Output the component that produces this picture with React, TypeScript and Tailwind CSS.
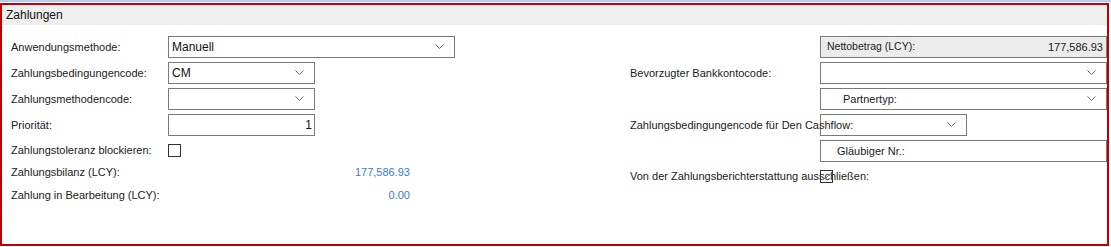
import React from 'react';

const font = { fontFamily: '"Liberation Sans", Arial, sans-serif' };

// small "v" chevron used by the dropdowns
const Chevron = () => (
  <svg width="9" height="6" viewBox="0 0 9 6" className="shrink-0">
    <polyline points="0.5,0.5 4.5,4.5 8.5,0.5" fill="none" stroke="#6b6b6b" strokeWidth="1" />
  </svg>
);

const Box = ({
  width,
  children,
  className = '',
}: {
  width: string;
  children?: React.ReactNode;
  className?: string;
}) => (
  <div className={`h-[22px] ${width} border border-[#7a7a7a] flex items-center ${className}`}>{children}</div>
);

const Dropdown = ({ width, value, indent = 'pl-[3px]' }: { width: string; value?: string; indent?: string }) => (
  <Box width={width} className={`${indent} pr-[10px] justify-between`}>
    <span className="text-[12px] text-[#111]">{value}</span>
    <Chevron />
  </Box>
);

const Label = ({ children, width }: { children: React.ReactNode; width: string }) => (
  <div className={`${width} shrink-0 whitespace-nowrap text-[11px] text-[#1b1b1b] relative z-10`}>{children}</div>
);

const CheckBox = ({ checked = false }: { checked?: boolean }) => (
  <div className="w-[13px] h-[13px] border border-[#333] flex items-center justify-center">
    {checked && (
      <svg width="9" height="7" viewBox="0 0 9 7">
        <polyline points="0.5,3.5 3,6 8.5,0.5" fill="none" stroke="#777" strokeWidth="1" />
      </svg>
    )}
  </div>
);

export default function App() {
  return (
    <div className="w-[1111px] h-[247px] bg-white overflow-hidden" style={font}>
      <div className="h-[2px] bg-[#b9cbe6]" />
      <div className="h-[1px] bg-white" />
      <div className="w-[1109px] h-[243px] border-2 border-[#c00000] flex flex-col">
        <div className="h-[20px] bg-[#efefef] pl-[4px] flex items-center text-[12px] text-[#111]">Zahlungen</div>

        <div className="flex pt-[11px] pl-[9px]">
          {/* left column */}
          <div className="w-[444px] flex flex-col">
            <div className="flex items-center">
              <Label width="w-[157px]">Anwendungsmethode:</Label>
              <Dropdown width="w-[287px]" value="Manuell" />
            </div>
            <div className="flex items-center mt-[4px]">
              <Label width="w-[157px]">Zahlungsbedingungencode:</Label>
              <Dropdown width="w-[147px]" value="CM" />
            </div>
            <div className="flex items-center mt-[4px]">
              <Label width="w-[157px]">Zahlungsmethodencode:</Label>
              <Dropdown width="w-[147px]" />
            </div>
            <div className="flex items-center mt-[4px]">
              <Label width="w-[157px]">Priorität:</Label>
              <Box width="w-[147px]" className="justify-end pr-[2px]">
                <span className="text-[12px] text-[#111]">1</span>
              </Box>
            </div>
            <div className="flex items-center mt-[8px] h-[13px]">
              <Label width="w-[157px]">Zahlungstoleranz blockieren:</Label>
              <CheckBox />
            </div>
            <div className="flex items-center mt-[8px] h-[14px]">
              <Label width="w-[157px]">Zahlungsbilanz (LCY):</Label>
              <div className="w-[242px] text-right text-[11px] text-[#3b7bd4]">177,586.93</div>
            </div>
            <div className="flex items-center mt-[9px] h-[14px]">
              <Label width="w-[157px]">Zahlung in Bearbeitung (LCY):</Label>
              <div className="w-[242px] text-right text-[11px] text-[#3b7bd4]">0.00</div>
            </div>
          </div>

          {/* right column */}
          <div className="ml-[175px] w-[477px] flex flex-col">
            <div className="flex items-center">
              <Label width="w-[190px]"> </Label>
              <Box width="w-[287px]" className="bg-[#ececec] justify-between pl-[6px] pr-[3px]">
                <span className="text-[10.5px] text-[#1b1b1b]">Nettobetrag (LCY):</span>
                <span className="text-[11px] text-[#1b1b1b]">177,586.93</span>
              </Box>
            </div>
            <div className="flex items-center mt-[4px]">
              <Label width="w-[190px]">Bevorzugter Bankkontocode:</Label>
              <Dropdown width="w-[287px]" />
            </div>
            <div className="flex items-center mt-[4px]">
              <Label width="w-[190px]"> </Label>
              <Box width="w-[287px]" className="justify-between pl-[22px] pr-[10px]">
                <span className="text-[11px] text-[#1b1b1b]">Partnertyp:</span>
                <Chevron />
              </Box>
            </div>
            <div className="flex items-center mt-[4px]">
              <Label width="w-[190px]">Zahlungsbedingungencode für Den Cashflow:</Label>
              <Dropdown width="w-[147px]" />
            </div>
            <div className="flex items-center mt-[4px]">
              <Label width="w-[190px]"> </Label>
              <Box width="w-[287px]" className="pl-[16px]">
                <span className="text-[11px] text-[#1b1b1b]">Gläubiger Nr.:</span>
              </Box>
            </div>
            <div className="flex items-center mt-[8px] h-[13px]">
              <Label width="w-[190px]">Von der Zahlungsberichterstattung ausschließen:</Label>
              <div className="relative z-20">
                <CheckBox checked />
              </div>
            </div>
          </div>
        </div>
      </div>
    </div>
  );
}
